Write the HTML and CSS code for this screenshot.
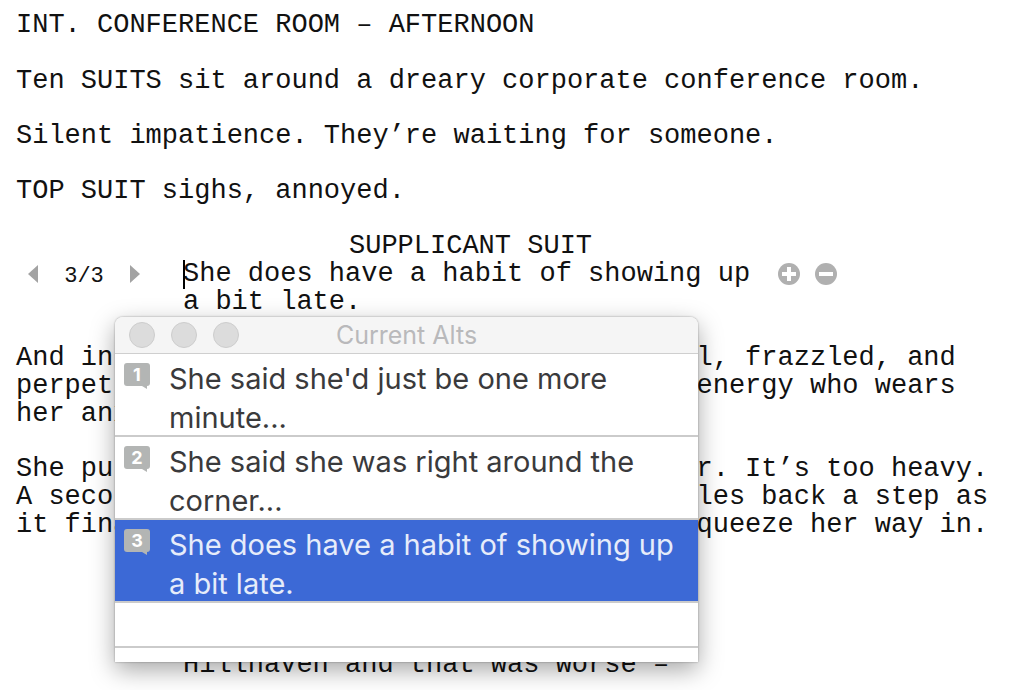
FILE: index.html
```html
<!DOCTYPE html>
<html lang="en">
<head>
    <meta charset="UTF-8">
    <meta name="viewport" content="width=device-width, initial-scale=1.0">
    <title>Script Editor - Current Alts</title>
    <link rel="stylesheet" href="styles.css">
</head>
<body>
    <main class="script">
        <h1 class="scene-heading">INT. CONFERENCE ROOM – AFTERNOON</h1>
        <p class="action">Ten SUITS sit around a dreary corporate conference room.</p>
        <p class="action">Silent impatience. They’re waiting for someone.</p>
        <p class="action">TOP SUIT sighs, annoyed.</p>

        <h2 class="character">SUPPLICANT SUIT</h2>
        <div class="dialogue-row">
            <div class="alt-nav">
                <button class="icon-button" aria-label="Previous alt">
                    <svg width="12" height="18" viewBox="0 0 12 18"><path d="M11 0v18L1 9z" fill="#a3a3a3"/></svg>
                </button>
                <span class="alt-count">3/3</span>
                <button class="icon-button" aria-label="Next alt">
                    <svg width="12" height="18" viewBox="0 0 12 18"><path d="M1 0v18l10-9z" fill="#a3a3a3"/></svg>
                </button>
            </div>
            <p class="dialogue"><span class="caret"></span>She does have a habit of showing up a bit late.</p>
            <div class="alt-actions">
                <button class="icon-button" aria-label="Add alt">
                    <svg width="22" height="22" viewBox="0 0 22 22"><circle cx="11" cy="11" r="11" fill="#b0b0b0"/><path d="M11 4v14M4 11h14" stroke="#fff" stroke-width="4"/></svg>
                </button>
                <button class="icon-button" aria-label="Remove alt">
                    <svg width="22" height="22" viewBox="0 0 22 22"><circle cx="11" cy="11" r="11" fill="#b0b0b0"/><path d="M4 11h14" stroke="#fff" stroke-width="4"/></svg>
                </button>
            </div>
        </div>

        <p class="action">And in rushes LATE SUIT, thirties, cheerful, frazzled, and
perpetually late, a whirlwind of restless energy who wears
her anxieties on her sleeve.</p>
        <p class="action">She pulls on the massive glass meeting door. It’s too heavy.
A second hard tug and it budges. She stumbles back a step as
it finally swings open, and she tries to squeeze her way in.</p>
        <p class="dialogue dialogue-next">Hillhaven and that was worse –</p>
    </main>

    <section class="alts-window" aria-label="Current Alts">
        <header class="title-bar">
            <div class="window-buttons">
                <button class="window-button" aria-label="Close"></button>
                <button class="window-button" aria-label="Minimize"></button>
                <button class="window-button" aria-label="Zoom"></button>
            </div>
            <span class="title">Current Alts</span>
        </header>
        <ol class="alts">
            <li><button class="alt"><span class="badge">1</span><span class="alt-text">She said she'd just be one more minute...</span></button></li>
            <li><button class="alt"><span class="badge">2</span><span class="alt-text">She said she was right around the corner...</span></button></li>
            <li><button class="alt selected"><span class="badge">3</span><span class="alt-text">She does have a habit of showing up a bit late.</span></button></li>
            <li class="alt-empty"></li>
        </ol>
    </section>
</body>
</html>
```

FILE: styles.css
```css
body {
    margin: 0;
    background: #fff;
    color: #111;
    font-family: "Liberation Mono", "Courier New", monospace;
    font-size: 27px;
    line-height: 28px;
    overflow: hidden;
}
h1, h2, p {
    margin: 0;
    font-size: 27px;
    font-weight: normal;
}
button {
    border: none;
    padding: 0;
    background: none;
    font: inherit;
    color: inherit;
    cursor: pointer;
}
.script {
    padding: 11px 16px 0;
}
.scene-heading {
    margin-bottom: 28px;
}
.action {
    margin-bottom: 27px;
    white-space: pre;
}
.character {
    padding-left: 333px;
}

/* dialogue with its alt controls */
.dialogue-row {
    display: grid;
    grid-template-columns: 167px 595px auto;
    margin-bottom: 28px;
}
.alt-nav {
    display: flex;
    align-items: center;
    justify-content: space-between;
    height: 28px;
    padding: 0 42px 0 11px;
}
.alt-count {
    font-size: 22px;
    padding-top: 6px;
}
.icon-button {
    display: flex;
}
.caret {
    position: absolute;
    width: 2px;
    height: 29px;
    background: #000;
}
.alt-actions {
    display: flex;
    align-items: center;
    gap: 15px;
    height: 28px;
}
.dialogue-next {
    margin-top: 112px;
    padding-left: 167px;
}

/* floating window */
.alts-window {
    position: absolute;
    top: 317px;
    left: 115px;
    width: 583px;
    background: #fff;
    border-radius: 8px 8px 0 0;
    box-shadow: 0 0 2px rgba(0, 0, 0, 0.4), 0 8px 24px rgba(0, 0, 0, 0.35);
    color: #3a3a3c;
    font-family: Inter, "Liberation Sans", sans-serif;
    font-size: 29px;
    line-height: 39px;
    padding-bottom: 14px;
}
.title-bar {
    display: grid;
    grid-template-columns: 1fr auto 1fr;
    align-items: center;
    height: 36px;
    line-height: 36px;
    background: #f5f5f5;
    border-bottom: 1px solid #cfcfcf;
    border-radius: 8px 8px 0 0;
}
.window-buttons {
    display: flex;
    gap: 16px;
    padding-left: 14px;
}
.window-button {
    width: 26px;
    height: 26px;
    background: #dcdcdc;
    border: 1px solid #cdcdcd;
    border-radius: 50%;
}
.title {
    color: #b9b9bb;
    font-size: 25px;
}
.alts {
    list-style: none;
    margin: 0;
    padding: 0;
}
.alts li {
    border-bottom: 2px solid #cbcbcb;
}
.alt {
    display: flex;
    align-items: flex-start;
    gap: 19px;
    width: 100%;
    height: 81px;
    padding: 5px 9px 0;
    text-align: left;
}
.alt.selected {
    background: #3c69d6;
    color: #e6ecfa;
}
.alt-text {
    flex: 1;
}
.badge {
    position: relative;
    width: 26px;
    height: 23px;
    margin-top: 4px;
    background: #b3b5b4;
    border-radius: 3px;
    color: #fff;
    font-size: 18px;
    font-weight: bold;
    line-height: 23px;
    text-align: center;
}
.badge::after {
    content: "";
    position: absolute;
    right: 3px;
    bottom: -3px;
    border-top: 3px solid #b3b5b4;
    border-left: 5px solid transparent;
}
.alt-empty {
    height: 43px;
}
```
